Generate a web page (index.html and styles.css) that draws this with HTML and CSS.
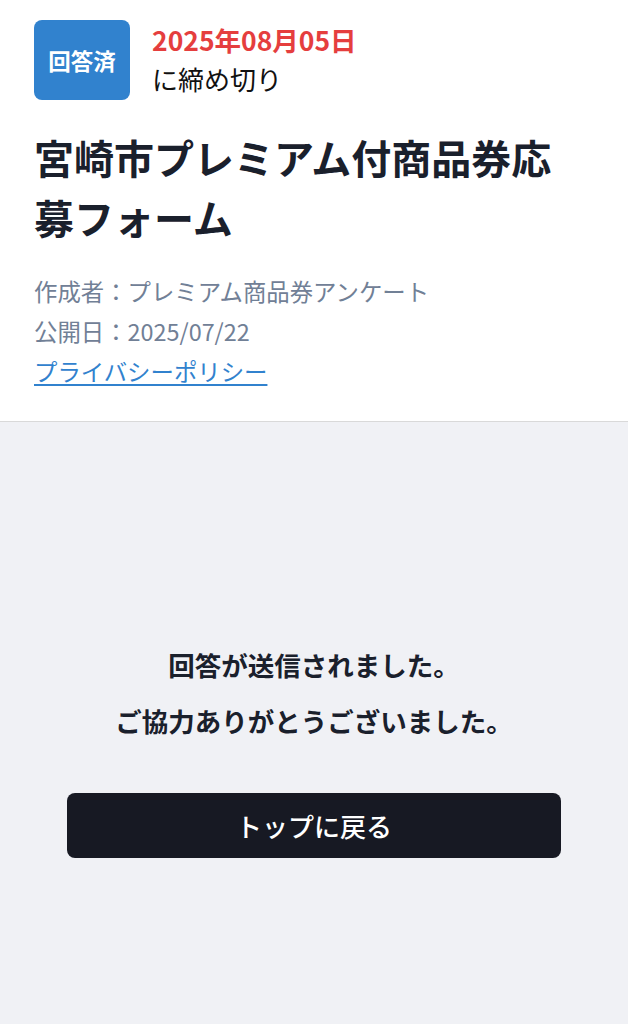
FILE: index.html
```html
<!DOCTYPE html>
<html lang="ja">
<head>
<meta charset="utf-8">
<link rel="stylesheet" href="styles.css">
</head>
<body>
<header class="head">
  <div class="status">
    <div class="badge">回答済</div>
    <div class="deadline">
      <div class="date">2025年08月05日</div>
      <div class="due">に締め切り</div>
    </div>
  </div>
  <h1 class="title">宮崎市プレミアム付商品券応募フォーム</h1>
  <div class="meta">
    <div>作成者：プレミアム商品券アンケート</div>
    <div>公開日：2025/07/22</div>
    <a class="policy" href="#">プライバシーポリシー</a>
  </div>
</header>
<main class="done">
  <p class="msg">回答が送信されました。<br>ご協力ありがとうございました。</p>
  <button class="back">トップに戻る</button>
</main>
</body>
</html>
```
FILE: styles.css
```css
* { box-sizing: border-box; }
html, body { margin: 0; padding: 0; }
body {
  font-family: "Noto Sans CJK JP", "Noto Sans", sans-serif;
  background: #f0f1f5;
  min-height: 1024px;
  color: #1a202c;
}
.head {
  background: #ffffff;
  padding: 20px 40px 30px 34px;
  border-bottom: 1px solid #d9d9d9;
}
.status {
  display: flex;
  gap: 22px;
  align-items: flex-start;
}
.badge {
  width: 96px;
  height: 80px;
  border-radius: 8px;
  background: #3182ce;
  color: #fff;
  font-weight: 700;
  font-size: 22.5px;
  display: flex;
  align-items: center;
  justify-content: center;
}
.deadline { line-height: 39px; font-size: 26px; }
.date { color: #e53e3e; font-weight: 700; font-size: 26.5px; }
.due { color: #111; }
.title {
  margin: 27px 0 0;
  font-size: 40px;
  line-height: 60px;
  font-weight: 700;
  color: #1a202c;
}
.meta {
  margin-top: 24px;
  font-size: 23.4px;
  line-height: 40px;
  color: #718096;
}
.policy {
  display: inline-block;
  color: #3182ce;
  text-decoration: underline;
  text-underline-offset: 3px;
}
.done {
  padding: 215px 67px 0;
  display: flex;
  flex-direction: column;
  align-items: stretch;
}
.msg {
  margin: 0;
  text-align: center;
  font-size: 26.5px;
  line-height: 56px;
  font-weight: 700;
  color: #1a202c;
}
.back {
  margin-top: 44px;
  height: 65px;
  border: none;
  border-radius: 8px;
  background: #171923;
  color: #fff;
  font-family: inherit;
  font-size: 26px;
  font-weight: 500;
}
```
